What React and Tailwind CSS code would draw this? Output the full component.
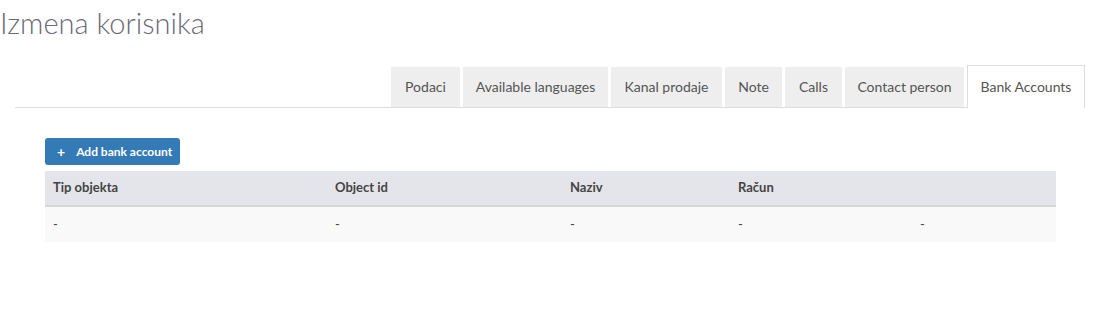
import React from "react";

const tabs = [
  { label: "Podaci", w: "w-[69px]" },
  { label: "Available languages", w: "w-[145px]" },
  { label: "Kanal prodaje", w: "w-[111px]" },
  { label: "Note", w: "w-[57px]" },
  { label: "Calls", w: "w-[57px]" },
  { label: "Contact person", w: "w-[119px]" },
];

const columns = [
  { label: "Tip objekta", w: "w-[282px]" },
  { label: "Object id", w: "w-[235px]" },
  { label: "Naziv", w: "w-[168px]" },
  { label: "Račun", w: "w-[182px]" },
  { label: "", w: "flex-1" },
];

export default function App() {
  return (
    <div className="h-[328px] w-[1102px] bg-white font-['Lato',sans-serif] text-[#333]">
      <h1 className="pt-[7px] pl-0 text-[29px] leading-[32px] font-light text-[#6a6a78]">
        Izmena korisnika
      </h1>

      <div className="mt-[26px] ml-[15px] flex w-[1070px] items-end justify-end border-b border-[#ddd]">
        {tabs.map((t) => (
          <div
            key={t.label}
            className={`${t.w} mr-[3px] flex h-[40px] items-center justify-center bg-[#eee] pb-[2px] text-[14px] text-[#555]`}
          >
            {t.label}
          </div>
        ))}
        <div className="-mb-px flex h-[43px] w-[118px] items-center justify-center border border-b-0 border-[#ddd] bg-white pb-[2px] text-[14px] text-[#555]">
          Bank Accounts
        </div>
      </div>

      <div className="mt-[30px] ml-[45px] w-[1011px]">
        <button className="flex h-[27px] w-[135px] items-center rounded-[3px] bg-[#337ab7] pl-[12px] text-[12px] font-bold text-white">
          <span className="mr-[11px] text-[14px] font-bold leading-none">+</span>
          Add bank account
        </button>

        <div className="mt-[6px]">
          <div className="flex h-[36px] items-center border-b-2 border-[#d5d6db] bg-[#e4e5ea] text-[13px] font-bold text-[#444]">
            {columns.map((c, i) => (
              <div key={i} className={`${c.w} pl-[8px]`}>
                {c.label}
              </div>
            ))}
          </div>
          <div className="flex h-[35px] items-center bg-[#f9f9f9] text-[13px] text-[#444]">
            <div className="w-[282px] pl-[8px]">-</div>
            <div className="w-[235px] pl-[8px]">-</div>
            <div className="w-[168px] pl-[8px]">-</div>
            <div className="w-[182px] pl-[8px]">-</div>
            <div className="flex-1 pl-[8px]">-</div>
          </div>
        </div>
      </div>
    </div>
  );
}
